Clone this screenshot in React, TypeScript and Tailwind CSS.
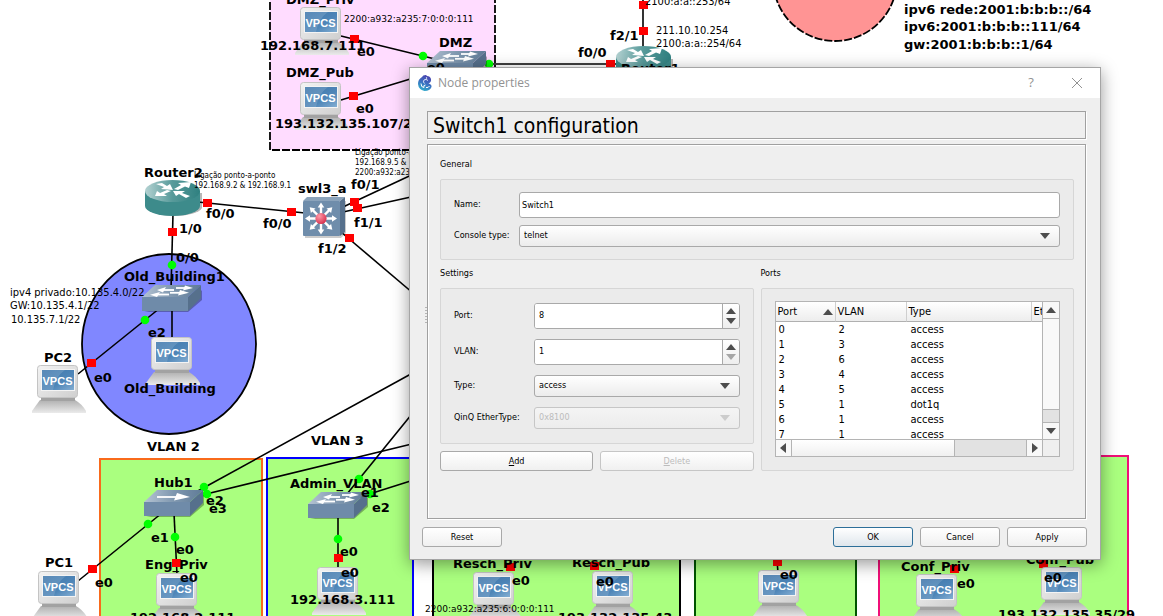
import React, { useState } from "react";

type Point = [number, number];
type Label = { x: number; y: number; text: string };

const links: [number, number, number, number][] = [
  [341, 36, 435, 59],
  [341, 100, 440, 70],
  [480, 64, 620, 64],
  [643, 0, 643, 48],
  [198, 202, 305, 213],
  [173, 214, 171, 290],
  [172, 308, 172, 340],
  [160, 308, 78, 374],
  [343, 207, 420, 171],
  [343, 212, 420, 195],
  [341, 232, 420, 299],
  [162, 513, 78, 581],
  [174, 513, 177, 575],
  [196, 492, 420, 369],
  [198, 496, 420, 442],
  [347, 494, 420, 404],
  [360, 497, 420, 478],
  [338, 514, 338, 570],
  [777, 560, 778, 573],
];

const stopped: Point[] = [
  [354, 39], [353, 96], [610, 64], [643, 5], [643, 31], [207, 203], [291, 212],
  [172, 232], [91, 363], [354, 202], [357, 208], [349, 238], [92, 569], [176, 563],
  [338, 558], [510, 567], [594, 566], [777, 562], [954, 569], [1043, 564],
];

const started: Point[] = [
  [423, 56], [489, 64], [172, 265], [145, 320], [148, 524], [175, 537],
  [204, 487], [207, 494], [359, 479], [370, 494], [338, 539],
];

const hosts: Point[] = [
  [300, 7], [300, 82], [37, 365], [151, 337], [38, 571], [156, 573],
  [317, 567], [473, 572], [592, 571], [758, 570], [916, 574], [1041, 567],
];

const boldLabels: Label[] = [
  { x: 286, y: 4, text: "DMZ_Priv" },
  { x: 260, y: 50, text: "192.168.7.111" },
  { x: 357, y: 56, text: "e0" },
  { x: 439, y: 47, text: "DMZ" },
  { x: 427, y: 72, text: "e0" },
  { x: 286, y: 77, text: "DMZ_Pub" },
  { x: 356, y: 113, text: "e0" },
  { x: 275, y: 128, text: "193.132.135.107/29" },
  { x: 578, y: 57, text: "f0/0" },
  { x: 610, y: 40, text: "f2/1" },
  { x: 621, y: 73, text: "Router1" },
  { x: 904, y: 14, text: "ipv6 rede:2001:b:b:b::/64" },
  { x: 904, y: 31, text: "ipv6:2001:b:b:b::111/64" },
  { x: 904, y: 49, text: "gw:2001:b:b:b::1/64" },
  { x: 144, y: 177, text: "Router2" },
  { x: 206, y: 218, text: "f0/0" },
  { x: 179, y: 233, text: "1/0" },
  { x: 176, y: 262, text: "0/0" },
  { x: 124, y: 281, text: "Old_Building1" },
  { x: 298, y: 193, text: "swl3_a" },
  { x: 263, y: 228, text: "f0/0" },
  { x: 351, y: 189, text: "f0/1" },
  { x: 354, y: 227, text: "f1/1" },
  { x: 318, y: 253, text: "f1/2" },
  { x: 148, y: 337, text: "e2" },
  { x: 44, y: 362, text: "PC2" },
  { x: 94, y: 382, text: "e0" },
  { x: 124, y: 393, text: "Old_Building" },
  { x: 147, y: 451, text: "VLAN 2" },
  { x: 311, y: 445, text: "VLAN 3" },
  { x: 154, y: 487, text: "Hub1" },
  { x: 206, y: 505, text: "e2" },
  { x: 209, y: 513, text: "e3" },
  { x: 151, y: 542, text: "e1" },
  { x: 176, y: 554, text: "e0" },
  { x: 45, y: 567, text: "PC1" },
  { x: 95, y: 587, text: "e0" },
  { x: 145, y: 569, text: "Eng_Priv" },
  { x: 180, y: 582, text: "e0" },
  { x: 130, y: 622, text: "192.168.2.111" },
  { x: 290, y: 488, text: "Admin_VLAN" },
  { x: 361, y: 497, text: "e1" },
  { x: 372, y: 512, text: "e2" },
  { x: 340, y: 556, text: "e0" },
  { x: 341, y: 577, text: "e0" },
  { x: 290, y: 604, text: "192.168.3.111" },
  { x: 453, y: 568, text: "Resch_Priv" },
  { x: 512, y: 585, text: "e0" },
  { x: 572, y: 567, text: "Resch_Pub" },
  { x: 596, y: 586, text: "e0" },
  { x: 558, y: 622, text: "193.132.135.43" },
  { x: 780, y: 579, text: "e0" },
  { x: 901, y: 571, text: "Conf_Priv" },
  { x: 957, y: 588, text: "e0" },
  { x: 1026, y: 564, text: "Conf_Pub" },
  { x: 1044, y: 582, text: "e0" },
  { x: 998, y: 619, text: "193.132.135.35/29" },
];

const notes: Label[] = [
  { x: 10, y: 296, text: "ipv4 privado:10.135.4.0/22" },
  { x: 10, y: 309, text: "GW:10.135.4.1/22" },
  { x: 11, y: 323, text: "10.135.7.1/22" },
  { x: 645, y: 5, text: "2100:a:a::253/64" },
  { x: 656, y: 34, text: "211.10.10.254" },
  { x: 656, y: 47, text: "2100:a:a::254/64" },
];

const smallNotes: Label[] = [
  { x: 194, y: 178, text: "Ligação ponto-a-ponto" },
  { x: 194, y: 188, text: "192.168.9.2 & 192.168.9.1" },
  { x: 355, y: 155, text: "Ligação ponto-a-ponto" },
  { x: 355, y: 165, text: "192.168.9.5 & 192.168.9.6" },
  { x: 355, y: 175, text: "2200:a932:a235:9::5" },
];

const wideNotes: Label[] = [
  { x: 344, y: 22, text: "2200:a932:a235:7:0:0:0:111" },
  { x: 425, y: 612, text: "2200:a932:a235:6:0:0:0:111" },
];

function Texts({ items, className }: { items: Label[]; className: string }) {
  return (
    <g className={className}>
      {items.map((l, i) => (
        <text key={i} x={l.x} y={l.y}>{l.text}</text>
      ))}
    </g>
  );
}

function Host({ at }: { at: Point }) {
  return (
    <g transform={`translate(${at[0]} ${at[1]})`}>
      <path d="M3 35 H38 Q45 39 49 46 V48 H-5 V46 Q0 39 3 35Z" fill="url(#base)" />
      <rect x="4" y="32" width="34" height="4" fill="#a2a2a2" />
      <rect x="0.5" y="0.5" width="40" height="32" rx="3" fill="url(#case)" stroke="#c4c4c4" />
      <rect x="4.500" y="4.500" width="33" height="21" fill="url(#screen)" stroke="#f4f4f4" />
      <path d="M5 5 H28 Q19 11 16 25 H5Z" fill="#fff" opacity="0.14" />
      <text x="20.500" y="20" textAnchor="middle" fill="#fff" className="font-['Liberation_Sans'] text-[11px] font-bold">VPCS</text>
    </g>
  );
}

function Arrow({ d, head }: { d: string; head: string }) {
  return (
    <g>
      <path d={d} stroke="#fff" strokeWidth="1.800" fill="none" />
      <path d={head} fill="#fff" />
    </g>
  );
}

function SwitchBox({ at, hub = false }: { at: Point; hub?: boolean }) {
  return (
    <g transform={`translate(${at[0]} ${at[1]})`}>
      <path d="M2 27 H46 L60 15 V5 L48 18Z" fill="#000" opacity="0.3" />
      <path d="M0 12 L13 0 H59 L46 12Z" fill="url(#swTop)" />
      <path d="M0 12 H46 V26 H0Z" fill="#6f8ba9" />
      <path d="M46 12 L59 0 V13 L46 26Z" fill="#56708c" />
      {hub ? (
        <Arrow d="M13 7 H36" head="M33 3 L46 7 L30 10.500Z" />
      ) : (
        <>
          <Arrow d="M21 5 H32" head="M24 2 L15 5 L21 7.500Z" />
          <Arrow d="M15 9.500 H27" head="M18 7 L8 9.800 L15 12Z" />
          <Arrow d="M34 3 H45" head="M43 0.500 L51 3 L41 5.500Z" />
          <Arrow d="M28 7.800 H40" head="M38 5 L47 7.800 L36 10.500Z" />
        </>
      )}
    </g>
  );
}

function Router({ at }: { at: Point }) {
  return (
    <g transform={`translate(${at[0]} ${at[1]})`}>
      <path d="M2 13 V28 A28 10 0 0 0 57 28 V13Z" fill="#000" opacity="0.28" />
      <path d="M0 11 V26 A27.500 10 0 0 0 55 26 V11Z" fill="#3d8b8b" />
      <ellipse cx="27.500" cy="11" rx="27.500" ry="11" fill="url(#rtTop)" />
      <g fill="#fff">
        <path d="M11 4 L17 3 L22 6 L25 4 L28 10 L16 9 L19 7Z" />
        <path d="M29 9 L36 5 L33 3 L46 2 L44 8 L40 6.500 L33 10Z" />
        <path d="M26 11 L19 14 L22 16 L10 16 L12 11 L15 13 L22 10Z" />
        <path d="M28 11 L40 11 L37 13 L45 16 L41 18 L34 14 L31 16Z" />
      </g>
    </g>
  );
}

function Layer3Switch() {
  return (
    <g transform="translate(303 197)">
      <path d="M2 4 H43 V36 L38 41 H2Z" fill="#000" opacity="0.2" />
      <path d="M0 4 L4 0 H42 L37 4Z" fill="#8ba3bb" />
      <path d="M37 4 L42 0 V35 L37 39Z" fill="#56708c" />
      <rect y="4" width="37" height="35" rx="1" fill="#6f8dab" />
      {[0, 45, 90, 135, 180, 225, 270, 315].map((a) => (
        <g key={a} transform={`translate(18 21.500) rotate(${a})`}>
          <path d="M-1.200 0 V-11 H-3.300 L0 -16 L3.300 -11 H1.200 V0Z" fill="#fff" />
        </g>
      ))}
      <circle cx="18" cy="21.500" r="5.600" fill="url(#core)" />
    </g>
  );
}

function Topology() {
  return (
    <svg width="1163" height="616" className="absolute top-0 left-0" role="img" aria-label="Network topology">
      <defs>
        <linearGradient id="case" x1="0" y1="0" x2="1" y2="1">
          <stop offset="0" stopColor="#f3f3f3" />
          <stop offset="1" stopColor="#cfcfcf" />
        </linearGradient>
        <linearGradient id="base" x1="0" y1="0" x2="0" y2="1">
          <stop offset="0" stopColor="#b0b0b0" />
          <stop offset="1" stopColor="#ebebeb" />
        </linearGradient>
        <linearGradient id="screen" x1="0" y1="0" x2="1" y2="1">
          <stop offset="0" stopColor="#3d76ab" />
          <stop offset="0.600" stopColor="#4f86b8" />
          <stop offset="1" stopColor="#86b0d4" />
        </linearGradient>
        <linearGradient id="swTop" x1="0" y1="0" x2="1" y2="0">
          <stop offset="0" stopColor="#b5c4d3" />
          <stop offset="0.500" stopColor="#8098b0" />
          <stop offset="1" stopColor="#5f7b97" />
        </linearGradient>
        <linearGradient id="rtTop" x1="0" y1="0" x2="1" y2="0">
          <stop offset="0" stopColor="#b4d2d2" />
          <stop offset="0.500" stopColor="#579a9a" />
          <stop offset="1" stopColor="#2f8080" />
        </linearGradient>
        <radialGradient id="core" cx="0.350" cy="0.300" r="0.800">
          <stop offset="0" stopColor="#ff9aa8" />
          <stop offset="1" stopColor="#d32646" />
        </radialGradient>
      </defs>

      <rect x="270" y="-20" width="225" height="170" fill="#ffdcff" stroke="#000" strokeWidth="1.800" strokeDasharray="8 2" />
      <circle cx="835" cy="-21" r="62" fill="#ff9494" stroke="#000" strokeWidth="1.800" strokeDasharray="8 2" />
      <ellipse cx="169" cy="344" rx="87" ry="90" fill="#8087ff" stroke="#000" strokeWidth="1.800" />
      <g fill="#aaff7f" strokeWidth="2">
        <rect x="100" y="459" width="162" height="180" stroke="#f96a1b" />
        <rect x="267" y="458" width="146" height="180" stroke="#0000ff" />
        <rect x="433" y="458" width="247" height="180" stroke="#000" />
        <rect x="695" y="458" width="161" height="180" stroke="#005500" />
        <rect x="879" y="456" width="249" height="180" stroke="#f00f78" />
      </g>

      <g stroke="#000" strokeWidth="1.600">
        {links.map(([x1, y1, x2, y2], i) => (
          <line key={i} x1={x1} y1={y1} x2={x2} y2={y2} />
        ))}
      </g>
      <g fill="#ff0000">
        {stopped.map(([x, y], i) => (
          <rect key={i} x={x - 4} y={y - 4} width="9" height="8" />
        ))}
      </g>
      <g fill="#00ff00">
        {started.map(([x, y], i) => (
          <circle key={i} cx={x} cy={y} r="4.300" />
        ))}
      </g>

      {hosts.map((p, i) => (
        <Host key={i} at={p} />
      ))}
      <SwitchBox at={[427, 51]} />
      <SwitchBox at={[142, 285]} />
      <SwitchBox at={[308, 492]} />
      <SwitchBox at={[144, 490]} hub />
      <Router at={[145, 180]} />
      <Router at={[616, 46]} />
      <Layer3Switch />

      <Texts items={boldLabels} className="font-['DejaVu_Sans',sans-serif] text-[13px] font-bold" />
      <Texts items={notes} className="font-['DejaVu_Sans_Condensed','DejaVu_Sans',sans-serif] text-[11px]" />
      <Texts items={smallNotes} className="font-['DejaVu_Sans_Condensed','DejaVu_Sans',sans-serif] text-[8px]" />
      <Texts items={wideNotes} className="font-['DejaVu_Sans',sans-serif] text-[9px]" />
    </svg>
  );
}

const triangles = {
  up: "M0 6 L5 0 L10 6Z",
  down: "M0 0 H10 L5 6Z",
  left: "M6 0 V10 L0 5Z",
  right: "M0 0 L6 5 L0 10Z",
};

function Triangle({ dir, className = "text-[#4d4d4d]" }: { dir: keyof typeof triangles; className?: string }) {
  const tall = dir === "left" || dir === "right";
  return (
    <svg width={tall ? 6 : 10} height={tall ? 10 : 6} className={`shrink-0 ${className}`} aria-hidden="true">
      <path d={triangles[dir]} fill="currentColor" />
    </svg>
  );
}

function GroupLabel({ children }: { children: React.ReactNode }) {
  return <h2 className="mb-[9px] h-3 leading-3">{children}</h2>;
}

const groupBox = "rounded-[2px] border border-[#d6d6d6] bg-[#ebebeb]";

function Spin({ id, value, onChange, min }: { id: string; value: number; onChange: (n: number) => void; min: number }) {
  return (
    <div className="flex h-[26px] overflow-hidden rounded-[3px] border border-[#a9a9a9] bg-white">
      <input
        id={id}
        type="number"
        min={min}
        value={value}
        onChange={(e) => onChange(Number(e.target.value))}
        className="min-w-0 flex-1 appearance-none bg-white px-1 [appearance:textfield] outline-none [&::-webkit-inner-spin-button]:appearance-none"
      />
      <div className="flex w-[17px] flex-col border-l border-[#a9a9a9] bg-linear-to-b from-white to-[#eeeeee]">
        <button type="button" aria-label="Increase" className="flex flex-1 items-center justify-center pt-[2px]" onClick={() => onChange(value + 1)}>
          <Triangle dir="up" />
        </button>
        <button type="button" aria-label="Decrease" disabled={value <= min} className="flex flex-1 items-center justify-center pb-[2px] text-[#4d4d4d] disabled:text-[#a6a6a6]" onClick={() => onChange(value - 1)}>
          <Triangle dir="down" className="" />
        </button>
      </div>
    </div>
  );
}

function Combo({ id, options, disabled = false }: { id: string; options: string[]; disabled?: boolean }) {
  return (
    <div className="relative h-[22px]">
      <select
        id={id}
        disabled={disabled}
        className="block h-full w-full appearance-none rounded-[3px] border border-[#a9a9a9] bg-linear-to-b from-white to-[#ececec] px-1 outline-none disabled:border-[#c6c6c6] disabled:from-[#f4f4f4] disabled:text-[#bcbcbc] disabled:opacity-100"
      >
        {options.map((o) => (
          <option key={o}>{o}</option>
        ))}
      </select>
      <span className="pointer-events-none absolute top-2 right-[10px]">
        <Triangle dir="down" className={disabled ? "text-[#cccccc]" : "text-[#4d4d4d]"} />
      </span>
    </div>
  );
}

function PushButton({ children, className, ...rest }: React.ButtonHTMLAttributes<HTMLButtonElement>) {
  return (
    <button
      type="button"
      {...rest}
      className={`h-5 rounded-[3px] border bg-linear-to-b from-white text-center leading-[18px] disabled:border-[#c6c6c6] disabled:text-[#bcbcbc] ${className}`}
    >
      {children}
    </button>
  );
}

const plain = "border-[#a9a9a9] to-[#f0f0f0]";

const ports: [number, number, string][] = [
  [0, 2, "access"],
  [1, 3, "access"],
  [2, 6, "access"],
  [3, 4, "access"],
  [4, 5, "access"],
  [5, 1, "dot1q"],
  [6, 1, "access"],
  [7, 1, "access"],
];

function PortsTable() {
  const th = "border-r border-[#cfcfcf] pt-[2px] pb-0 pl-[2px] font-normal";
  return (
    <div className="grid h-[156px] grid-cols-[minmax(0,1fr)_17px] grid-rows-[minmax(0,1fr)_17px] border border-[#b4b4b4] bg-white text-[11px]">
      <div className="overflow-hidden">
        <table className="w-full min-w-[320px] table-fixed border-separate border-spacing-0 text-left">
          <colgroup>
            <col className="w-[60px]" />
            <col className="w-[71px]" />
            <col className="w-[125px]" />
            <col />
          </colgroup>
          <thead>
            <tr className="h-[19px] bg-linear-to-b from-white to-[#ececec] [&>th]:border-b [&>th]:border-b-[#b0b0b0]">
              <th className={th}>
                <span className="flex items-center justify-between pr-[2px] leading-4">
                  Port <Triangle dir="up" />
                </span>
              </th>
              <th className={th}>VLAN</th>
              <th className={th}>Type</th>
              <th className={th}>EtherType</th>
            </tr>
          </thead>
          <tbody>
            {ports.map(([port, vlan, type]) => (
              <tr key={port} className="h-[15px] leading-[15px]">
                <td className="pl-[3px]">{port}</td>
                <td className="pl-[3px]">{vlan}</td>
                <td className="pl-1">{type}</td>
                <td />
              </tr>
            ))}
          </tbody>
        </table>
      </div>
      <div className="flex flex-col border-l border-[#b4b4b4] bg-[#e2e2e2]">
        <button type="button" aria-label="Scroll up" className="flex h-[17px] items-center justify-center border-b border-[#b4b4b4] bg-[#f8f8f8]">
          <Triangle dir="up" />
        </button>
        <div className="flex-1 border-b border-[#b4b4b4] bg-[#f9f9f9]" />
        <div className="h-3" />
        <button type="button" aria-label="Scroll down" className="flex h-[17px] items-center justify-center border-t border-[#b4b4b4] bg-[#f8f8f8]">
          <Triangle dir="down" />
        </button>
      </div>
      <div className="flex border-t border-[#b4b4b4] bg-[#e2e2e2]">
        <button type="button" aria-label="Scroll left" className="flex w-4 items-center justify-center border-r border-[#b4b4b4] bg-[#f8f8f8]">
          <Triangle dir="left" />
        </button>
        <div className="flex-1 border-r border-[#b4b4b4] bg-linear-to-b from-white to-[#f0f0f0]" />
        <div className="w-[71px]" />
        <button type="button" aria-label="Scroll right" className="flex w-4 items-center justify-center border-l border-[#b4b4b4] bg-[#f8f8f8]">
          <Triangle dir="right" />
        </button>
      </div>
      <div className="border-t border-l border-[#b4b4b4] bg-[#efefef]" />
    </div>
  );
}

function AppLogo() {
  return (
    <svg width="16" height="18" viewBox="0 0 16 18" className="mr-[5px]" aria-hidden="true">
      <defs>
        <linearGradient id="logo" x1="0.700" y1="0" x2="0.300" y2="1">
          <stop offset="0" stopColor="#4b3fae" />
          <stop offset="0.500" stopColor="#3c6fc0" />
          <stop offset="1" stopColor="#2fb0cc" />
        </linearGradient>
      </defs>
      <path d="M5 3 Q6 0.500 10 1 L9 2 Q13 1.500 14 5 Q14.500 8 11.500 9.500 Q15 10.500 14.500 13 Q13 17 7.500 17 Q1.500 15.500 1 10 Q0.800 5.500 5 3Z" fill="url(#logo)" />
      <path d="M11 6.500 Q9 4.500 7 6 Q5.500 8 7.500 9.500" stroke="#e8eefc" strokeWidth="0.900" fill="none" />
      <path d="M4 9.500 Q4 13.500 7 13.500 Q6 11 8.500 11 M9 13.500 Q11.500 14 12.500 12" stroke="#fff" strokeWidth="1" fill="none" />
      <circle cx="9.500" cy="4" r="0.700" fill="#fff" />
    </svg>
  );
}

function NodeDialog() {
  const [name, setName] = useState("Switch1");
  const [port, setPort] = useState(8);
  const [vlan, setVlan] = useState(1);

  return (
    <section
      role="dialog"
      aria-labelledby="dialog-title"
      className="relative border border-[#a5a5a5] bg-[#efefef] font-['DejaVu_Sans_Condensed','DejaVu_Sans',sans-serif] text-[9px] text-black shadow-[0_4px_16px_rgba(0,0,0,0.4)]"
    >
      <header className="flex h-[30px] items-center bg-white pl-[7px] font-['Open_Sans',sans-serif] text-[12px] text-[#929292]">
        <AppLogo />
        <span id="dialog-title" className="flex-1">Node properties</span>
        <button type="button" aria-label="Help" className="w-[46px] text-center text-[13px]">?</button>
        <button type="button" aria-label="Close" className="flex w-[46px] justify-center">
          <svg width="12" height="12" aria-hidden="true">
            <path d="M1 1 L11 11 M11 1 L1 11" stroke="#929292" fill="none" />
          </svg>
        </button>
      </header>

      <div className="pt-[13px] pr-[13px] pb-3 pl-3">
        <div className="flex pr-px">
          <div className="flex w-[5px] flex-col justify-center gap-[2px]" aria-hidden="true">
            {[0, 1, 2, 3, 4, 5].map((i) => (
              <i key={i} className="block h-px w-[2px] self-end bg-[#b5b5b5]" />
            ))}
          </div>
          <div className="min-w-0 flex-1">
            <h1 className="h-7 border border-[#a0a0a0] pl-[5px] text-[21px] leading-[28px] shadow-[1px_1px_0_#fff]">
              {name} configuration
            </h1>

            <div className="mt-[5px] border border-[#a0a0a0] pt-[13px] pr-[11px] pb-[47px] pl-3 shadow-[inset_1px_1px_0_#fff,1px_1px_0_#fff]">
              <GroupLabel>General</GroupLabel>
              <div className={`${groupBox} grid grid-cols-[65px_minmax(0,1fr)] items-center gap-y-[7px] px-[13px] py-3`}>
                <label htmlFor="name">Name:</label>
                <input
                  id="name"
                  value={name}
                  onChange={(e) => setName(e.target.value)}
                  className="h-[26px] min-w-0 rounded-[3px] border border-[#a9a9a9] bg-white px-[2px] outline-none"
                />
                <label htmlFor="console">Console type:</label>
                <Combo id="console" options={["telnet", "none"]} />
              </div>

              <div className="mt-[7px] grid grid-cols-2 gap-[7px]">
                <div>
                  <GroupLabel>Settings</GroupLabel>
                  <div className={`${groupBox} grid grid-cols-[80px_minmax(0,1fr)] items-center gap-y-[10px] px-[13px] py-[14px]`}>
                    <label htmlFor="port">Port:</label>
                    <Spin id="port" min={0} value={port} onChange={setPort} />
                    <label htmlFor="vlan">VLAN:</label>
                    <Spin id="vlan" min={1} value={vlan} onChange={setVlan} />
                    <label htmlFor="type">Type:</label>
                    <Combo id="type" options={["access", "dot1q", "qinq"]} />
                    <label htmlFor="ethertype">QinQ EtherType:</label>
                    <Combo id="ethertype" options={["0x8100"]} disabled />
                  </div>
                  <div className="mt-[7px] grid grid-cols-2 gap-[7px]">
                    <PushButton className={plain}><u>A</u>dd</PushButton>
                    <PushButton className={plain} disabled><u>D</u>elete</PushButton>
                  </div>
                </div>
                <div className="flex flex-col">
                  <GroupLabel>Ports</GroupLabel>
                  <div className={`${groupBox} flex-1 px-[13px] py-3`}>
                    <PortsTable />
                  </div>
                </div>
              </div>
            </div>
          </div>
        </div>

        <footer className="mt-2 flex gap-[7px]">
          <PushButton className={`${plain} mr-auto w-20`}>Reset</PushButton>
          <PushButton className="w-20 border-[#2d6f99] to-[#dfe6ec]">OK</PushButton>
          <PushButton className={`${plain} w-20`}>Cancel</PushButton>
          <PushButton className={`${plain} w-20`}>Apply</PushButton>
        </footer>
      </div>
    </section>
  );
}

export default function App() {
  return (
    <main className="relative min-h-screen overflow-hidden bg-white pt-[67px] pr-[62px] pl-[409px]">
      <Topology />
      <NodeDialog />
    </main>
  );
}
